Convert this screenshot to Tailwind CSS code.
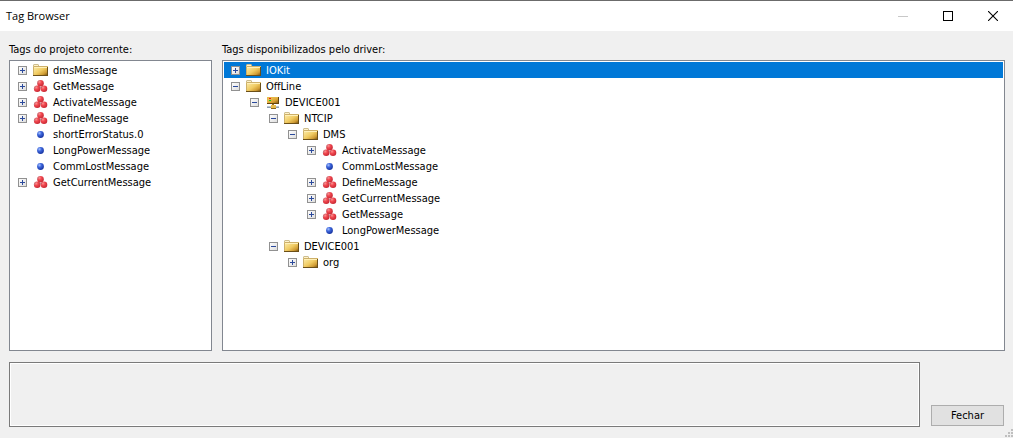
<!DOCTYPE html>
<html lang="pt-BR">
<head>
<meta charset="utf-8">
<meta name="viewport" content="width=device-width, initial-scale=1">
<title>Tag Browser</title>
<script src="https://cdn.jsdelivr.net/npm/@tailwindcss/browser@4"></script>
</head>
<body class="flex h-screen flex-col border-t border-[#6b6b6b] bg-[#f0f0f0] font-['DejaVu_Sans_Condensed','Noto_Sans',sans-serif] text-[11px] leading-4 text-black">

<svg class="absolute size-0" aria-hidden="true">
  <defs>
    <linearGradient id="gold" x1="0" y1="0" x2="1" y2="1">
      <stop offset="0" stop-color="#fdf0b4"/><stop offset=".5" stop-color="#f0cb62"/><stop offset=".75" stop-color="#d09c34"/><stop offset="1" stop-color="#5a3c08"/>
    </linearGradient>
    <linearGradient id="case" x1="0" y1="0" x2="1" y2="1">
      <stop offset="0" stop-color="#f8d468"/><stop offset=".6" stop-color="#d8a030"/><stop offset="1" stop-color="#6a4608"/>
    </linearGradient>
    <radialGradient id="red" cx=".35" cy=".3" r=".75">
      <stop offset="0" stop-color="#ff9090"/><stop offset=".4" stop-color="#f04850"/><stop offset="1" stop-color="#c42430"/>
    </radialGradient>
    <radialGradient id="blue" cx=".35" cy=".3" r=".75">
      <stop offset="0" stop-color="#a8c4ff"/><stop offset=".4" stop-color="#3d66dc"/><stop offset="1" stop-color="#14309c"/>
    </radialGradient>
    <linearGradient id="box" x1="0" y1="0" x2="1" y2="1">
      <stop offset="0" stop-color="#fff"/><stop offset="1" stop-color="#dcdcdc"/>
    </linearGradient>
  </defs>
  <symbol id="folder" viewBox="0 0 16 16">
    <path d="M0 3 1 2h4l1 1v1H0z" fill="#cdbd8e"/>
    <path d="M1 3h4v1H1z" fill="#fff3cc"/>
    <path d="M0 4h15v10H0z" fill="url(#gold)"/>
    <path d="M.5 13.500V4.500h14" fill="none" stroke="#cdb06a"/>
    <path d="M1 5.500h13" stroke="#fff0b8"/>
    <path d="M0 13.500h14.500V5" fill="none" stroke="#6b4f18"/>
  </symbol>
  <symbol id="cluster" viewBox="0 0 16 16">
    <circle cx="7.500" cy="5.200" r="3.300" fill="url(#red)"/>
    <circle cx="4.200" cy="10.800" r="3.300" fill="url(#red)"/>
    <circle cx="11" cy="10.800" r="3.300" fill="url(#red)"/>
    <path d="m6 8.600 1.700 1.200L9.300 8.600" fill="none" stroke="#a8606a" stroke-width=".8"/>
    <path d="M4.500 5.500c0-1.500 1-2.600 2-3M1.300 11c0-1.500 1-2.600 2-3" fill="none" stroke="#b08890" stroke-width=".7"/>
  </symbol>
  <symbol id="dot" viewBox="0 0 16 16">
    <circle cx="7.500" cy="8.500" r="3.400" fill="url(#blue)"/>
  </symbol>
  <symbol id="device" viewBox="0 0 16 16">
    <path d="M2 3h12v7H2z" fill="url(#case)"/>
    <path d="M2.500 9V3.500H13" fill="none" stroke="#e6b848"/>
    <path d="M2 9.500h11.500V3" fill="none" stroke="#65440c"/>
    <path d="M4 4h2v1H4z" fill="#f01818"/><path d="M4 6h2v1H4z" fill="#08d818"/>
    <path d="M7 10h2v2H7z" fill="#98742c"/>
    <path d="M2 12h12v2H2z" fill="#8c9cb0"/><path d="M2 12h12v1H2z" fill="#bcc8d4"/>
    <path d="M6 11h5v4H6z" fill="#e8bc4c"/><path d="M6 14.500h5" stroke="#8a6416"/>
  </symbol>
  <symbol id="plus" viewBox="0 0 9 9">
    <rect x=".5" y=".5" width="8" height="8" fill="url(#box)" stroke="#919191"/>
    <path d="M2 4.500h5M4.500 2v5" stroke="#2b4a9c"/>
  </symbol>
  <symbol id="minus" viewBox="0 0 9 9">
    <rect x=".5" y=".5" width="8" height="8" fill="url(#box)" stroke="#919191"/>
    <path d="M2 4.500h5" stroke="#2b4a9c"/>
  </symbol>
</svg>

<header class="flex h-[30px] shrink-0 items-center bg-white pl-[6px]">
  <h1 class="flex-1 font-['Open_Sans',sans-serif] text-[11px]">Tag Browser</h1>
  <button class="flex h-full w-[46px] items-center justify-center" aria-label="Minimizar" disabled><svg class="size-[10px]" viewBox="0 0 10 10"><path d="M0 5.500h10" stroke="#c8c8c8"/></svg></button>
  <button class="flex h-full w-[44px] items-center justify-center" aria-label="Maximizar"><svg class="size-[10px]" viewBox="0 0 10 10"><rect x=".5" y=".5" width="9" height="9" fill="none" stroke="#000"/></svg></button>
  <button class="mr-px flex h-full w-[42px] items-center justify-center pl-[4px]" aria-label="Fechar janela"><svg class="size-[10px]" viewBox="0 0 10 10"><path d="m0 0 10 10M10 0 0 10" stroke="#000" stroke-width="1.100"/></svg></button>
</header>

<main class="flex min-h-0 flex-1 flex-col gap-[11px] pt-[11px] pr-2 pb-[11px] pl-[9px]">
  <div class="flex min-h-0 flex-1 gap-[10px]">
    <section class="flex w-[203px] shrink-0 flex-col">
      <h2 id="project-tags" class="mb-[2px]">Tags do projeto corrente:</h2>
      <ul role="tree" aria-labelledby="project-tags" class="flex-1 overflow-auto border border-[#828790] bg-white p-px whitespace-nowrap">
        <li role="treeitem" class="flex h-4 items-center pl-[7px]"><button class="mr-[6px]" aria-label="Expandir"><svg class="size-[9px]"><use href="#plus"/></svg></button><svg class="mr-1 size-4"><use href="#folder"/></svg><span class="pt-[2px]">dmsMessage</span></li>
        <li role="treeitem" class="flex h-4 items-center pl-[7px]"><button class="mr-[6px]" aria-label="Expandir"><svg class="size-[9px]"><use href="#plus"/></svg></button><svg class="mr-1 size-4"><use href="#cluster"/></svg><span class="pt-[2px]">GetMessage</span></li>
        <li role="treeitem" class="flex h-4 items-center pl-[7px]"><button class="mr-[6px]" aria-label="Expandir"><svg class="size-[9px]"><use href="#plus"/></svg></button><svg class="mr-1 size-4"><use href="#cluster"/></svg><span class="pt-[2px]">ActivateMessage</span></li>
        <li role="treeitem" class="flex h-4 items-center pl-[7px]"><button class="mr-[6px]" aria-label="Expandir"><svg class="size-[9px]"><use href="#plus"/></svg></button><svg class="mr-1 size-4"><use href="#cluster"/></svg><span class="pt-[2px]">DefineMessage</span></li>
        <li role="treeitem" class="flex h-4 items-center pl-[22px]"><svg class="mr-1 size-4"><use href="#dot"/></svg><span class="pt-[2px]">shortErrorStatus.0</span></li>
        <li role="treeitem" class="flex h-4 items-center pl-[22px]"><svg class="mr-1 size-4"><use href="#dot"/></svg><span class="pt-[2px]">LongPowerMessage</span></li>
        <li role="treeitem" class="flex h-4 items-center pl-[22px]"><svg class="mr-1 size-4"><use href="#dot"/></svg><span class="pt-[2px]">CommLostMessage</span></li>
        <li role="treeitem" class="flex h-4 items-center pl-[7px]"><button class="mr-[6px]" aria-label="Expandir"><svg class="size-[9px]"><use href="#plus"/></svg></button><svg class="mr-1 size-4"><use href="#cluster"/></svg><span class="pt-[2px]">GetCurrentMessage</span></li>
      </ul>
    </section>
    <section class="flex min-w-0 flex-1 flex-col">
      <h2 id="driver-tags" class="mb-[2px]">Tags disponibilizados pelo driver:</h2>
      <ul role="tree" aria-labelledby="driver-tags" class="flex-1 overflow-auto border border-[#828790] bg-white p-px whitespace-nowrap">
        <li role="treeitem" aria-selected="true" class="flex h-4 items-center bg-[#0078d7] pl-[7px] text-white"><button class="mr-[6px]" aria-label="Expandir"><svg class="size-[9px]"><use href="#plus"/></svg></button><svg class="mr-1 size-4"><use href="#folder"/></svg><span class="pt-[2px]">IOKit</span></li>
        <li role="treeitem" aria-expanded="true">
          <div class="flex h-4 items-center pl-[7px]"><button class="mr-[6px]" aria-label="Recolher"><svg class="size-[9px]"><use href="#minus"/></svg></button><svg class="mr-1 size-4"><use href="#folder"/></svg><span class="pt-[2px]">OffLine</span></div>
          <ul role="group" class="pl-[19px]">
            <li role="treeitem" aria-expanded="true">
              <div class="flex h-4 items-center pl-[7px]"><button class="mr-[6px]" aria-label="Recolher"><svg class="size-[9px]"><use href="#minus"/></svg></button><svg class="mr-1 size-4"><use href="#device"/></svg><span class="pt-[2px]">DEVICE001</span></div>
              <ul role="group" class="pl-[19px]">
                <li role="treeitem" aria-expanded="true">
                  <div class="flex h-4 items-center pl-[7px]"><button class="mr-[6px]" aria-label="Recolher"><svg class="size-[9px]"><use href="#minus"/></svg></button><svg class="mr-1 size-4"><use href="#folder"/></svg><span class="pt-[2px]">NTCIP</span></div>
                  <ul role="group" class="pl-[19px]">
                    <li role="treeitem" aria-expanded="true">
                      <div class="flex h-4 items-center pl-[7px]"><button class="mr-[6px]" aria-label="Recolher"><svg class="size-[9px]"><use href="#minus"/></svg></button><svg class="mr-1 size-4"><use href="#folder"/></svg><span class="pt-[2px]">DMS</span></div>
                      <ul role="group" class="pl-[19px]">
                        <li role="treeitem" class="flex h-4 items-center pl-[7px]"><button class="mr-[6px]" aria-label="Expandir"><svg class="size-[9px]"><use href="#plus"/></svg></button><svg class="mr-1 size-4"><use href="#cluster"/></svg><span class="pt-[2px]">ActivateMessage</span></li>
                        <li role="treeitem" class="flex h-4 items-center pl-[22px]"><svg class="mr-1 size-4"><use href="#dot"/></svg><span class="pt-[2px]">CommLostMessage</span></li>
                        <li role="treeitem" class="flex h-4 items-center pl-[7px]"><button class="mr-[6px]" aria-label="Expandir"><svg class="size-[9px]"><use href="#plus"/></svg></button><svg class="mr-1 size-4"><use href="#cluster"/></svg><span class="pt-[2px]">DefineMessage</span></li>
                        <li role="treeitem" class="flex h-4 items-center pl-[7px]"><button class="mr-[6px]" aria-label="Expandir"><svg class="size-[9px]"><use href="#plus"/></svg></button><svg class="mr-1 size-4"><use href="#cluster"/></svg><span class="pt-[2px]">GetCurrentMessage</span></li>
                        <li role="treeitem" class="flex h-4 items-center pl-[7px]"><button class="mr-[6px]" aria-label="Expandir"><svg class="size-[9px]"><use href="#plus"/></svg></button><svg class="mr-1 size-4"><use href="#cluster"/></svg><span class="pt-[2px]">GetMessage</span></li>
                        <li role="treeitem" class="flex h-4 items-center pl-[22px]"><svg class="mr-1 size-4"><use href="#dot"/></svg><span class="pt-[2px]">LongPowerMessage</span></li>
                      </ul>
                    </li>
                  </ul>
                </li>
                <li role="treeitem" aria-expanded="true">
                  <div class="flex h-4 items-center pl-[7px]"><button class="mr-[6px]" aria-label="Recolher"><svg class="size-[9px]"><use href="#minus"/></svg></button><svg class="mr-1 size-4"><use href="#folder"/></svg><span class="pt-[2px]">DEVICE001</span></div>
                  <ul role="group" class="pl-[19px]">
                    <li role="treeitem" class="flex h-4 items-center pl-[7px]"><button class="mr-[6px]" aria-label="Expandir"><svg class="size-[9px]"><use href="#plus"/></svg></button><svg class="mr-1 size-4"><use href="#folder"/></svg><span class="pt-[2px]">org</span></li>
                  </ul>
                </li>
              </ul>
            </li>
          </ul>
        </li>
      </ul>
    </section>
  </div>
  <div class="flex shrink-0 items-end gap-[11px]">
    <div class="h-[65px] flex-1 border border-[#7a7a7a]"><div class="h-full border border-white"></div></div>
    <button class="mr-px mb-px h-[21px] w-[73px] border border-[#adadad] bg-[#e1e1e1]">Fechar</button>
  </div>
</main>

<svg class="absolute right-0 bottom-0 h-[9px] w-2" viewBox="0 0 8 9" fill="#bfbfbf" aria-hidden="true"><path d="M6 0h2v2H6zM3 3h2v2H3zM6 3h2v2H6zM0 6h2v2H0zM3 6h2v2H3zM6 6h2v2H6z"/></svg>
</body>
</html>
